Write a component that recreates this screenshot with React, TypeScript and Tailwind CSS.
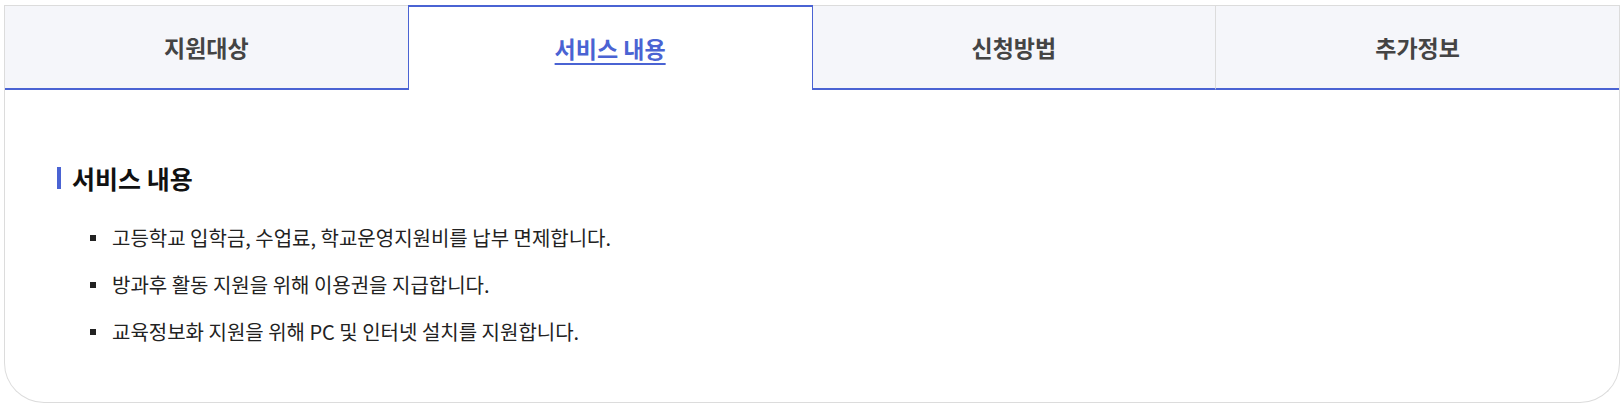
import React from "react";

const FONT = { fontFamily: '"Noto Sans CJK KR", "Noto Sans", sans-serif' };

export default function App() {
  const items = [
    "고등학교 입학금, 수업료, 학교운영지원비를 납부 면제합니다.",
    "방과후 활동 지원을 위해 이용권을 지급합니다.",
    "교육정보화 지원을 위해 PC 및 인터넷 설치를 지원합니다.",
  ];
  return (
    <div className="bg-white w-[1622px] h-[406px] pt-[5px] pl-[4px]" style={FONT}>
      <div className="w-[1616px] h-[398px] border-l border-r border-b border-[#dcdcdc] rounded-b-[40px] bg-white overflow-hidden">
        <div className="flex h-[85px]">
          <div className="flex-1 flex items-center justify-center bg-[#f5f6fa] border-t border-[#dcdcdc] border-b-2 border-b-[#4a63d3] text-[23px] font-bold text-[#444]">
            지원대상
          </div>
          <div className="flex-1 flex items-center justify-center bg-white border-t-2 border-l border-r border-[#4a63d3] text-[23px] font-bold text-[#4a63d3] underline underline-offset-[5px] decoration-2">
            서비스 내용
          </div>
          <div className="flex-1 flex items-center justify-center bg-[#f5f6fa] border-t border-[#dcdcdc] border-b-2 border-b-[#4a63d3] text-[23px] font-bold text-[#444]">
            신청방법
          </div>
          <div className="flex-1 flex items-center justify-center bg-[#f5f6fa] border-t border-l border-[#dcdcdc] border-b-2 border-b-[#4a63d3] text-[23px] font-bold text-[#444]">
            추가정보
          </div>
        </div>
        <div className="pl-[52px] pt-[72px]">
          <div className="flex items-center gap-[11px] h-[32px]">
            <span className="w-[4px] h-[22px] bg-[#4a63d3]" />
            <h2 className="text-[25px] font-bold text-[#111] leading-[32px]">서비스 내용</h2>
          </div>
          <ul className="mt-[30px] flex flex-col gap-[19px]">
            {items.map((t) => (
              <li key={t} className="flex items-center h-[28px] pl-[33px]">
                <span className="w-[6px] h-[6px] bg-[#222] mr-[16px]" />
                <span className="text-[20px] text-[#222] leading-[28px]">{t}</span>
              </li>
            ))}
          </ul>
        </div>
      </div>
    </div>
  );
}
